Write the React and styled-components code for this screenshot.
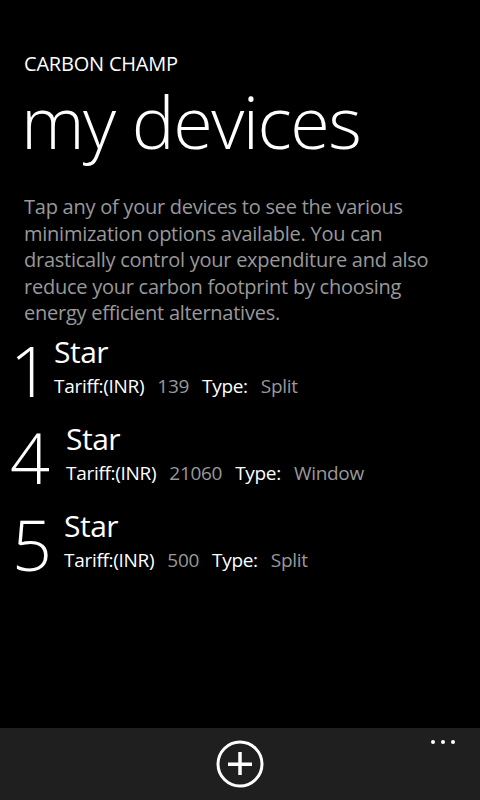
import React from "react";
import styled, { createGlobalStyle } from "styled-components";

const Global = createGlobalStyle`
  html, body { margin: 0; padding: 0; background: #000; }
  body { font-family: "Open Sans", "Noto Sans", sans-serif; color: #fff; }
  #root { height: 800px; }
`;

const Screen = styled.div`
  width: 480px;
  height: 800px;
  background: #000;
  display: flex;
  flex-direction: column;
  overflow: hidden;
`;

const Content = styled.div`
  flex: 1;
  display: flex;
  flex-direction: column;
`;

const Header = styled.header`
  padding: 52px 0 0 24px;
`;

const AppName = styled.div`
  font-size: 20px;
  line-height: 24px;
  letter-spacing: -0.2px;
  text-transform: uppercase;
`;

const PageTitle = styled.h1`
  margin: 7px 0 0 -3px;
  font-size: 72px;
  font-weight: 300;
  line-height: 76px;
  letter-spacing: -1.5px;
`;

const Description = styled.p`
  margin: 35px 24px 0 24px;
  font-size: 20px;
  line-height: 26.5px;
  color: #999;
  letter-spacing: -0.25px;
`;

const List = styled.div`
  display: flex;
  flex-direction: column;
  gap: 11px;
  margin-top: 5px;
`;

const Row = styled.div`
  display: flex;
  align-items: flex-start;
  padding-left: ${(p) => p.$indent}px;
`;

const Rank = styled.div`
  font-size: 70px;
  font-weight: 300;
  line-height: 76px;
  width: ${(p) => p.$w}px;
  flex: none;
`;

const Info = styled.div`
  display: flex;
  flex-direction: column;
`;

const Name = styled.div`
  font-size: 30px;
  line-height: 40px;
  letter-spacing: -0.5px;
`;

const Meta = styled.div`
  display: flex;
  align-items: baseline;
  font-size: 19px;
  line-height: 28px;
  letter-spacing: -0.3px;
`;

const Label = styled.span`
  color: #fff;
  margin-right: 13px;
`;

const Value = styled.span`
  color: #999;
  margin-right: 13px;
`;

const AppBar = styled.footer`
  height: 72px;
  background: #1f1f1f;
  position: relative;
  display: flex;
  justify-content: center;
  align-items: flex-start;
  padding-top: 12px;
  box-sizing: border-box;
`;

const IconButton = styled.button`
  background: none;
  border: none;
  padding: 0;
  width: 48px;
  height: 48px;
  display: flex;
  align-items: center;
  justify-content: center;
`;

const More = styled.div`
  position: absolute;
  top: 12px;
  right: 25px;
  display: flex;
  gap: 6px;
`;

const Dot = styled.span`
  width: 4px;
  height: 4px;
  border-radius: 50%;
  background: #fff;
`;

const devices = [
  { rank: 1, tariff: 139, type: "Split", indent: 10, w: 44 },
  { rank: 4, tariff: 21060, type: "Window", indent: 10, w: 56 },
  { rank: 5, tariff: 500, type: "Split", indent: 12, w: 52 },
];

export default function App() {
  return (
    <Screen>
      <Global />
      <Content>
        <Header>
          <AppName>Carbon Champ</AppName>
          <PageTitle>my devices</PageTitle>
        </Header>
        <Description>
          Tap any of your devices to see the various minimization options
          available. You can drastically control your expenditure and also
          reduce your carbon footprint by choosing energy efficient
          alternatives.
        </Description>
        <List>
          {devices.map((d) => (
            <Row key={d.rank} $indent={d.indent}>
              <Rank $w={d.w}>{d.rank}</Rank>
              <Info>
                <Name>Star</Name>
                <Meta>
                  <Label>Tariff:(INR)</Label>
                  <Value>{d.tariff}</Value>
                  <Label>Type:</Label>
                  <Value>{d.type}</Value>
                </Meta>
              </Info>
            </Row>
          ))}
        </List>
      </Content>
      <AppBar>
        <IconButton aria-label="add">
          <svg width="48" height="48" viewBox="0 0 48 48">
            <circle cx="24" cy="24" r="22" fill="none" stroke="#fff" strokeWidth="3" />
            <rect x="12" y="22.5" width="24" height="3.5" fill="#fff" />
            <rect x="22.25" y="12" width="3.5" height="23" fill="#fff" />
          </svg>
        </IconButton>
        <More>
          <Dot />
          <Dot />
          <Dot />
        </More>
      </AppBar>
    </Screen>
  );
}
